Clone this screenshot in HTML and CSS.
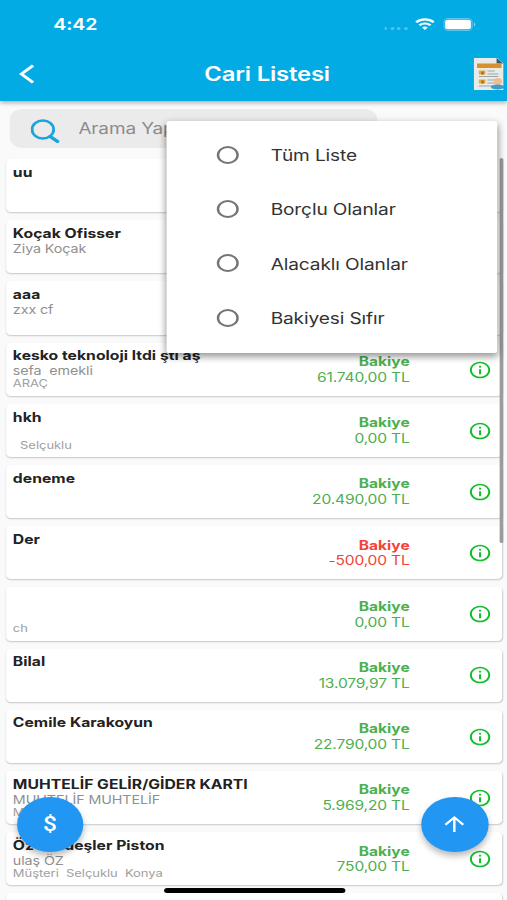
FILE: index.html
```html
<!DOCTYPE html>
<html lang="tr">
<head>
<meta charset="utf-8">
<title>Cari Listesi</title>
<link rel="stylesheet" href="styles.css">
</head>
<body>
<svg class="defs" aria-hidden="true">
  <symbol id="info" viewBox="0 0 24 24"><path d="M11 7h2v2h-2zm0 4h2v6h-2zm1-9C6.48 2 2 6.48 2 12s4.48 10 10 10 10-4.48 10-10S17.52 2 12 2zm0 18c-4.41 0-8-3.59-8-8s3.590-8 8-8 8 3.590 8 8-3.590 8-8 8z"/></symbol>
</svg>
<div class="screen">
  <header class="appbar">
    <div class="status">
      <span class="time">4:42</span>
      <span class="signals">
        <span class="dots"><i></i><i></i><i></i><i></i></span>
        <svg class="wifi" viewBox="0 0 16 12"><g fill="none" stroke="#fff" stroke-width="2.200"><path d="M.8 4.300C4.800.3 11.200.3 15.200 4.300"/><path d="M3.500 7.300C6 4.900 10 4.900 12.500 7.300"/></g><path fill="#fff" d="M5.700 9.400C7 8.200 9 8.200 10.300 9.400L8 11.900z"/></svg>
        <svg class="battery" viewBox="0 0 27 13"><rect x=".5" y=".5" width="23" height="12" rx="3.500" fill="none" stroke="#fff" stroke-opacity=".35"/><rect x="1.500" y="1.800" width="21" height="9.400" rx="2" fill="#fff"/><path d="M25 4.500v4c1.500-.6 1.500-3.400 0-4z" fill="#fff" fill-opacity=".5"/></svg>
      </span>
    </div>
    <div class="toolbar">
      <svg class="back" viewBox="0 0 14 20"><path d="M12 1.500L2.500 10 12 18.500" fill="none" stroke="#fff" stroke-width="2.700"/></svg>
      <h1 class="title">Cari Listesi</h1>
      <svg class="report" viewBox="0 0 26 32">
        <path d="M1 0h19l5 5v27H1z" fill="#e9ebe9"/>
        <path d="M19.500 0L25 5.500h-5.500z" fill="#3b5966"/>
        <path d="M3.500 5.500h20V10h-20z" fill="#d8902e"/>
        <path d="M5 12.500h5.500v4H5zM5 21.500h5.500v4H5z" fill="#e6ad45"/>
        <path d="M7 13.500h2v3H7zM7 22.500h2v3H7z" fill="#a66c20"/>
        <path d="M12 13h6M12 16h9M5 18.500h16M12 22h6M12 25h7M5 28h12" stroke="#929c9f" stroke-width=".8"/>
        <circle cx="20.500" cy="23.500" r="3.400" fill="#edbd92"/>
        <ellipse cx="20.300" cy="29" rx="5.500" ry="2.600" fill="#419bc9"/>
      </svg>
    </div>
  </header>
  <div class="search">
    <svg viewBox="0 0 24 26"><ellipse cx="10" cy="10.500" rx="8.800" ry="9" fill="none" stroke="#1ba4dc" stroke-width="2.300"/><path d="M16 17.500l6 5" stroke="#1ba4dc" stroke-width="3" stroke-linecap="round"/></svg>
    <span>Arama Yapın</span>
  </div>
  <main class="list">
    <article class="card"><div class="who"><b>uu</b><p></p><small></small></div></article>
    <article class="card"><div class="who"><b>Koçak Ofisser</b><p>Ziya Koçak</p><small></small></div></article>
    <article class="card"><div class="who"><b>aaa</b><p>zxx cf</p><small></small></div></article>
    <article class="card"><div class="who"><b>kesko teknoloji ltdi şti aş</b><p>sefa  emekli</p><small>ARAÇ</small></div><div class="sum"><b>Bakiye</b><p>61.740,00 TL</p></div><svg class="info"><use href="#info"/></svg></article>
    <article class="card"><div class="who"><b>hkh</b><p></p><small>  Selçuklu</small></div><div class="sum"><b>Bakiye</b><p>0,00 TL</p></div><svg class="info"><use href="#info"/></svg></article>
    <article class="card"><div class="who"><b>deneme</b><p></p><small></small></div><div class="sum"><b>Bakiye</b><p>20.490,00 TL</p></div><svg class="info"><use href="#info"/></svg></article>
    <article class="card"><div class="who"><b>Der</b><p></p><small></small></div><div class="sum debt"><b>Bakiye</b><p>-500,00 TL</p></div><svg class="info"><use href="#info"/></svg></article>
    <article class="card"><div class="who"><b></b><p></p><small>ch</small></div><div class="sum"><b>Bakiye</b><p>0,00 TL</p></div><svg class="info"><use href="#info"/></svg></article>
    <article class="card"><div class="who"><b>Bilal</b><p></p><small></small></div><div class="sum"><b>Bakiye</b><p>13.079,97 TL</p></div><svg class="info"><use href="#info"/></svg></article>
    <article class="card"><div class="who"><b>Cemile Karakoyun</b><p></p><small></small></div><div class="sum"><b>Bakiye</b><p>22.790,00 TL</p></div><svg class="info"><use href="#info"/></svg></article>
    <article class="card"><div class="who"><b>MUHTELİF GELİR/GİDER KARTI</b><p>MUHTELİF MUHTELİF</p><small>M</small></div><div class="sum"><b>Bakiye</b><p>5.969,20 TL</p></div><svg class="info"><use href="#info"/></svg></article>
    <article class="card"><div class="who"><b>Öz Kardeşler Piston</b><p>ulaş ÖZ</p><small>Müşteri  Selçuklu  Konya</small></div><div class="sum"><b>Bakiye</b><p>750,00 TL</p></div><svg class="info"><use href="#info"/></svg></article>
    <article class="card"></article>
  </main>
  <div class="scrollbar"></div>
  <div class="menu">
    <label class="option"><i></i><span>Tüm Liste</span></label>
    <label class="option"><i></i><span>Borçlu Olanlar</span></label>
    <label class="option"><i></i><span>Alacaklı Olanlar</span></label>
    <label class="option"><i></i><span>Bakiyesi Sıfır</span></label>
  </div>
  <button class="fab fab-left">$</button>
  <button class="fab fab-right"><svg viewBox="0 0 24 24"><path d="M4 12l1.410 1.410L11 7.830V20h2V7.830l5.580 5.590L20 12l-8-8-8 8z"/></svg></button>
  <div class="home"></div>
</div>
</body>
</html>
```

FILE: styles.css
```css
* { box-sizing: border-box; }
body { margin: 0; width: 507px; height: 900px; overflow: hidden; background: #fafafa; }
.defs { position: absolute; width: 0; height: 0; }

/* 414pt wide layout stretched to the window width */
.screen {
  position: relative;
  width: 414px;
  height: 900px;
  overflow: hidden;
  transform: scaleX(1.22464);
  transform-origin: 0 0;
  background: #fafafa;
  font-family: Inter, "Liberation Sans", sans-serif;
  color: #222;
}

.appbar {
  position: relative;
  height: 101px;
  background: #02abe4;
  color: #fff;
  box-shadow: 0 2px 4px rgba(0, 0, 0, .3);
}
.status { display: flex; justify-content: space-between; height: 48px; padding: 0 25.500px 0 43.500px; align-items: center; }
.time { font-size: 16px; font-weight: 600; letter-spacing: -.1px; }
.signals { display: flex; align-items: center; }
.dots { display: flex; gap: 2.600px; margin: 9px 6px 0 0; }
.dots i { width: 2.800px; height: 3px; border-radius: 50%; background: rgba(255, 255, 255, .3); }
.wifi { width: 16px; height: 12px; margin-right: 7px; }
.battery { width: 27px; height: 13px; }
.toolbar { display: flex; align-items: center; height: 52px; padding: 0 2.500px 0 15.300px; }
.back { width: 14px; height: 20px; }
.title { margin: 0 auto 0 137.500px; font-size: 19.500px; line-height: 24px; font-weight: 600; letter-spacing: -.15px; }
.report { width: 26px; height: 32px; }

.search {
  display: flex;
  align-items: center;
  width: 300px;
  height: 39px;
  margin: 8px 0 0 8px;
  padding-left: 17px;
  border-radius: 10px;
  background: #ebebeb;
  color: #8c8c8c;
  font-size: 15.500px;
  letter-spacing: -.1px;
}
.search svg { width: 24px; height: 26px; margin: 6px 15px 0 0; }

.list { display: flex; flex-direction: column; gap: 8px; padding: 11px 4px 0 4.500px; }
.card {
  display: flex;
  flex: none;
  height: 53.200px;
  padding: 5.800px 8px 0 6px;
  border-radius: 4px;
  background: #fff;
  box-shadow: 0 1px 1.500px rgba(0, 0, 0, .2);
  white-space: pre;
}
.card p { margin: 0; }
.who { flex: 1; }
.who b, .who p, .who small { display: block; }
.who b { height: 16px; font-size: 12.800px; line-height: 16px; font-weight: 700; letter-spacing: .03px; }
.who p { height: 14px; font-size: 11.700px; line-height: 14px; letter-spacing: -.08px; color: #909090; }
.who small { height: 12px; font-size: 10.600px; line-height: 12px; letter-spacing: -.03px; color: #a0a0a0; }
.sum { padding-top: 5.700px; margin-right: 47.500px; text-align: right; font-size: 12.700px; line-height: 15.700px; color: #4caf50; }
.sum b { display: block; }
.sum p { letter-spacing: -.12px; }
.debt { color: #f44336; }
.info { width: 20px; height: 20px; margin-top: 11.200px; fill: #14bd2c; }

.scrollbar { position: absolute; left: 408px; top: 158px; width: 3px; height: 385px; border-radius: 2px; background: #9b9b9b; }

.menu {
  position: absolute;
  left: 136px;
  top: 120.500px;
  width: 270px;
  height: 232px;
  padding: 7px 0;
  border-radius: 2px;
  background: #fff;
  box-shadow: 0 4px 7px rgba(0, 0, 0, .34), 0 1px 8px rgba(0, 0, 0, .12);
}
.option { display: flex; align-items: center; height: 54.400px; padding-left: 41px; font-size: 15.600px; letter-spacing: -.1px; color: #333; }
.option span { padding-top: 1.500px; }
.option i { width: 18px; height: 18px; margin-right: 26px; border: 2px solid #757575; border-radius: 50%; }

.fab {
  position: absolute;
  top: 797px;
  display: flex;
  align-items: center;
  justify-content: center;
  width: 54.500px;
  height: 54.500px;
  padding: 0;
  border: 0;
  border-radius: 50%;
  background: #2196f3;
  box-shadow: 0 4px 6px rgba(0, 0, 0, .28);
  color: #fff;
  font: 500 20px Roboto, sans-serif;
}
.fab svg { width: 24px; height: 24px; fill: #fff; }
.fab-left { left: 13.500px; }
.fab-right { left: 344px; }
.home { position: absolute; left: 133.500px; top: 887.500px; width: 148px; height: 5px; border-radius: 3px; background: #000; }
```
